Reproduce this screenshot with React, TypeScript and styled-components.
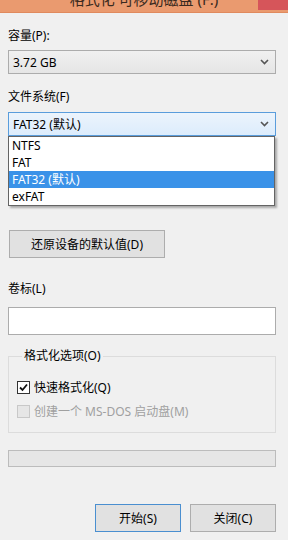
import React from "react";
import styled, { createGlobalStyle } from "styled-components";

const GlobalStyle = createGlobalStyle`
  html, body {
    margin: 0;
    padding: 0;
    background: #f0f0f0;
  }
  body {
    width: 288px;
    height: 540px;
    overflow: hidden;
    font-family: "Noto Sans", "Noto Sans CJK SC", sans-serif;
    font-size: 12px;
    color: #000;
  }
`;

const Window = styled.div`
  width: 288px;
  height: 540px;
  display: flex;
  flex-direction: column;
  background: #f0f0f0;
`;

const TitleBar = styled.div`
  height: 12px;
  flex: 0 0 12px;
  display: flex;
  align-items: flex-start;
  background: #ea9a6f;
  border-bottom: 1px solid #e08a5e;
  overflow: hidden;
`;

// only the lower part of the caption is in view
const TitleText = styled.div`
  flex: 1;
  text-align: center;
  font-size: 15px;
  line-height: 18px;
  margin-top: -10px;
  padding-left: 30px;
  color: #3a2a20;
  white-space: nowrap;
`;

const CloseButton = styled.div`
  width: 30px;
  height: 10px;
  background: #d6555a;
`;

const Content = styled.div`
  display: flex;
  flex-direction: column;
  padding: 0 12px 0 8px;
`;

const Label = styled.div<{ top: number }>`
  margin-top: ${(p) => p.top}px;
  line-height: 16px;
  height: 16px;
  white-space: nowrap;
`;

const SelectWrap = styled.div<{ top: number }>`
  position: relative;
  margin-top: ${(p) => p.top}px;
`;

const SelectBox = styled.div<{ focused?: boolean }>`
  height: 24px;
  box-sizing: border-box;
  display: flex;
  align-items: center;
  justify-content: space-between;
  padding: 0 6px 0 4px;
  border: 1px solid ${(p) => (p.focused ? "#5a9ddc" : "#acacac")};
  background: ${(p) =>
    p.focused
      ? "linear-gradient(#ecf4fc, #dcecfc)"
      : "linear-gradient(#f0f0f0, #e5e5e5)"};
`;

const Chevron = () => (
  <svg width="9" height="6" viewBox="0 0 9 6">
    <polyline points="1,1 4.5,4.5 8,1" fill="none" stroke="#555" strokeWidth="1.6" />
  </svg>
);

const DropList = styled.div`
  position: absolute;
  left: 0;
  top: 24px;
  width: 267px;
  box-sizing: border-box;
  background: #fff;
  border: 1px solid #646464;
  box-shadow: 2px 2px 2px rgba(0, 0, 0, 0.3);
  z-index: 2;
`;

const DropItem = styled.div<{ selected?: boolean }>`
  height: 17px;
  line-height: 17px;
  padding-left: 3px;
  background: ${(p) => (p.selected ? "#3a92e8" : "#fff")};
  color: ${(p) => (p.selected ? "#fff" : "#000")};
  white-space: nowrap;
`;

const Button = styled.button<{ isDefault?: boolean; width: number }>`
  width: ${(p) => p.width}px;
  height: 28px;
  box-sizing: border-box;
  font-family: inherit;
  font-size: 12px;
  color: #000;
  background: #e1e1e1;
  border: 1px solid ${(p) => (p.isDefault ? "#4a8fd0" : "#adadad")};
  border-radius: 0;
  padding: 0;
`;

const RestoreRow = styled.div`
  margin-top: 94px;
  padding-left: 1px;
`;

const TextInput = styled.div`
  margin-top: 10px;
  height: 28px;
  box-sizing: border-box;
  background: #fff;
  border: 1px solid #acacac;
`;

const GroupBox = styled.fieldset`
  margin: 13px 0 0 0;
  padding: 15px 0 13px 8px;
  border: 1px solid #dcdcdc;
  display: flex;
  flex-direction: column;
  gap: 8px;
`;

const Legend = styled.legend`
  padding: 0 2px;
  margin-left: 5px;
  line-height: 16px;
`;

const CheckRow = styled.div<{ disabled?: boolean }>`
  display: flex;
  align-items: center;
  gap: 4px;
  height: 16px;
  color: ${(p) => (p.disabled ? "#a0a0a0" : "#000")};
  white-space: nowrap;
`;

const CheckBox = styled.div<{ disabled?: boolean }>`
  width: 13px;
  height: 13px;
  box-sizing: border-box;
  border: 1px solid ${(p) => (p.disabled ? "#c8c8c8" : "#333")};
  background: ${(p) => (p.disabled ? "#e6e6e6" : "#fff")};
  display: flex;
  align-items: center;
  justify-content: center;
`;

const Progress = styled.div`
  margin-top: 17px;
  height: 17px;
  box-sizing: border-box;
  background: #e6e6e6;
  border: 1px solid #bcbcbc;
`;

const ButtonBar = styled.div`
  margin-top: 37px;
  display: flex;
  justify-content: flex-end;
  gap: 9px;
`;

export default function App() {
  return (
    <Window>
      <GlobalStyle />
      <TitleBar>
        <TitleText>格式化 可移动磁盘 (F:)</TitleText>
        <CloseButton />
      </TitleBar>
      <Content>
        <Label top={15}>容量(P):</Label>
        <SelectWrap top={6}>
          <SelectBox>
            <span>3.72 GB</span>
            <Chevron />
          </SelectBox>
        </SelectWrap>

        <Label top={15}>文件系统(F)</Label>
        <SelectWrap top={7}>
          <SelectBox focused>
            <span>FAT32 (默认)</span>
            <Chevron />
          </SelectBox>
          <DropList>
            <DropItem>NTFS</DropItem>
            <DropItem>FAT</DropItem>
            <DropItem selected>FAT32 (默认)</DropItem>
            <DropItem>exFAT</DropItem>
          </DropList>
        </SelectWrap>

        <RestoreRow>
          <Button width={156}>还原设备的默认值(D)</Button>
        </RestoreRow>

        <Label top={23}>卷标(L)</Label>
        <TextInput />

        <GroupBox>
          <Legend>格式化选项(O)</Legend>
          <CheckRow>
            <CheckBox>
              <svg width="9" height="9" viewBox="0 0 9 9">
                <polyline points="1,4.5 3.5,7 8,1.5" fill="none" stroke="#111" strokeWidth="1.8" />
              </svg>
            </CheckBox>
            <span>快速格式化(Q)</span>
          </CheckRow>
          <CheckRow disabled>
            <CheckBox disabled />
            <span>创建一个 MS-DOS 启动盘(M)</span>
          </CheckRow>
        </GroupBox>

        <Progress />

        <ButtonBar>
          <Button width={86} isDefault>开始(S)</Button>
          <Button width={86}>关闭(C)</Button>
        </ButtonBar>
      </Content>
    </Window>
  );
}
